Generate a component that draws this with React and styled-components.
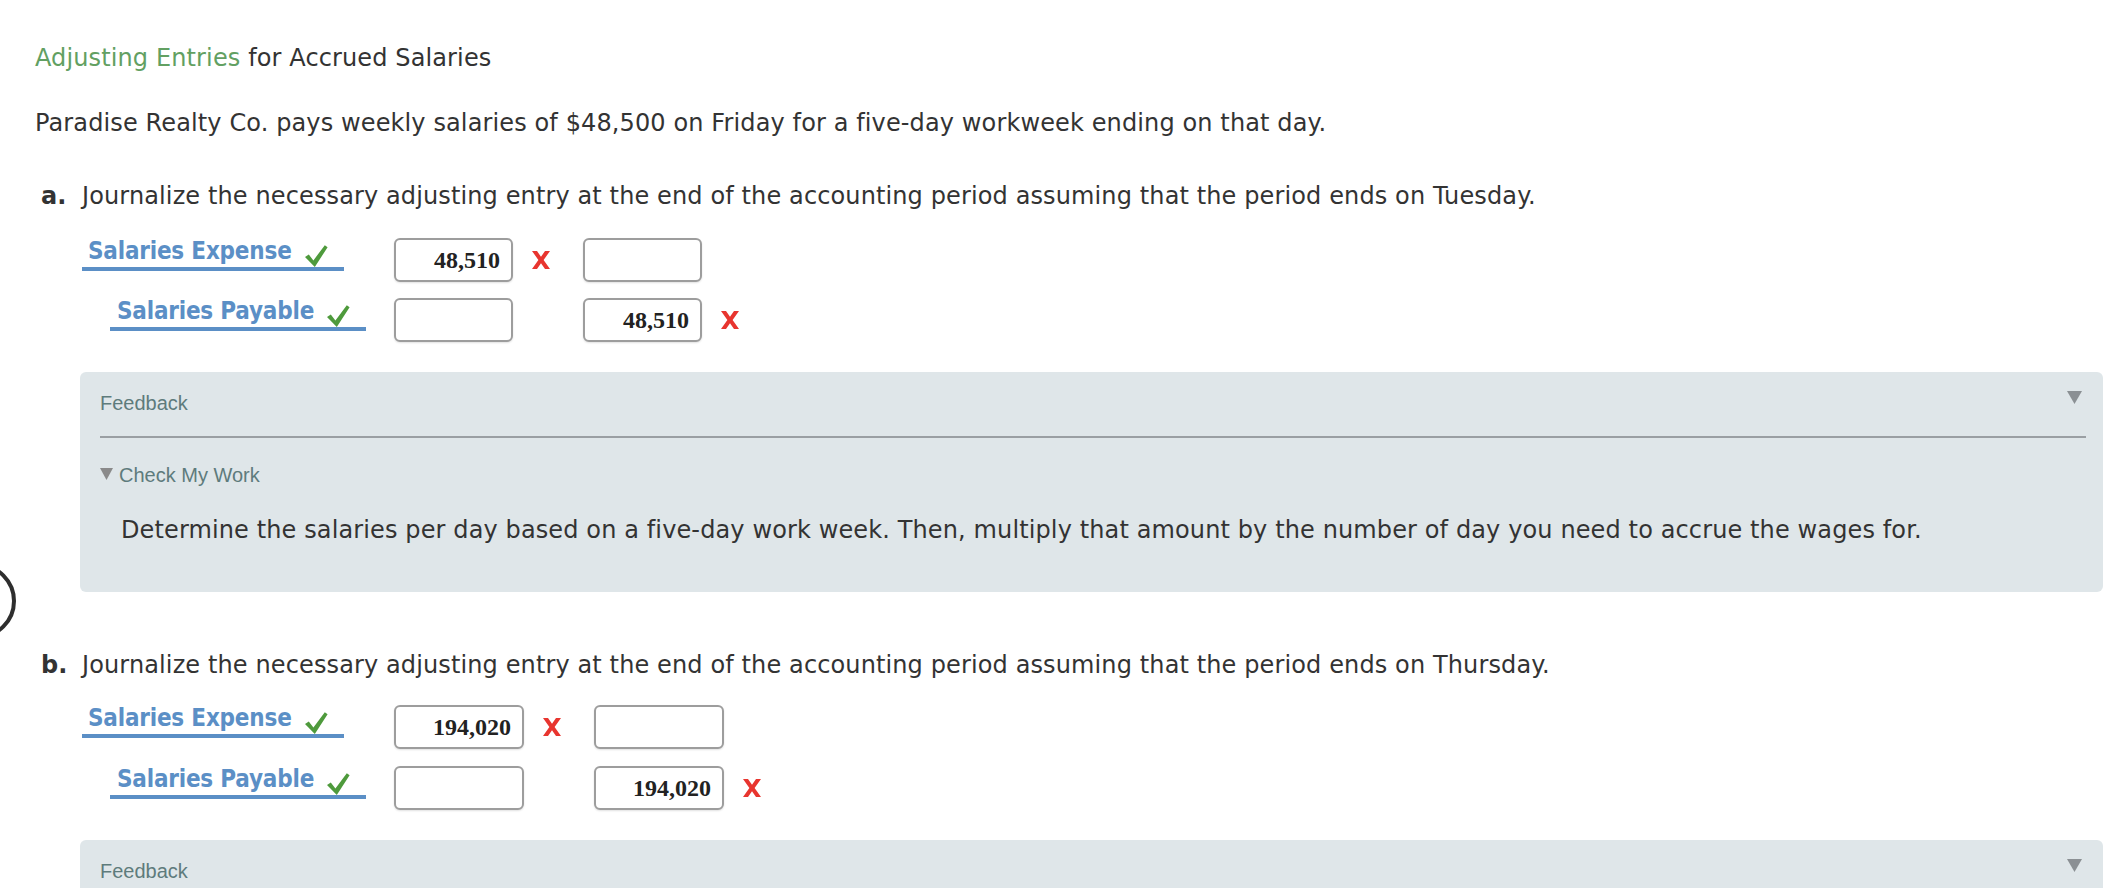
import React from "react";
import styled, { createGlobalStyle } from "styled-components";

const GlobalStyle = createGlobalStyle`
  html, body {
    margin: 0;
    padding: 0;
    background: #ffffff;
    overflow: hidden;
  }
  body {
    font-family: "DejaVu Sans", Verdana, sans-serif;
    color: #333333;
  }
`;

const Page = styled.div`
  position: relative;
  padding: 44px 1px 0 35px;
  font-family: "DejaVu Sans", Verdana, sans-serif;
  font-size: 24px;
  line-height: 28px;
  letter-spacing: 0.12px;
  color: #333333;
`;

const Title = styled.h1`
  margin: 0;
  font-size: 24px;
  line-height: 28px;
  font-weight: normal;
  color: #333333;
`;

const Green = styled.span`
  color: #62a062;
`;

const Intro = styled.p`
  margin: 37px 0 0 0;
`;

const Part = styled.section`
  margin-top: ${(p) => p.$top}px;
`;

const Question = styled.div`
  display: flex;
  padding-left: 6px;
`;

const PartLetter = styled.span`
  width: 41px;
  flex: none;
  font-weight: bold;
`;

const Entries = styled.div`
  display: flex;
  flex-direction: column;
  gap: ${(p) => p.$gap}px;
  margin-top: ${(p) => p.$top}px;
  padding-left: 47px;
`;

const EntryRow = styled.div`
  display: flex;
  align-items: flex-start;
`;

const LabelCell = styled.div`
  width: 312px;
  flex: none;
  padding-left: ${(p) => p.$indent}px;
  box-sizing: border-box;
  margin-top: -1px;
`;

const AccountLabel = styled.span`
  display: inline-flex;
  align-items: center;
  gap: 12px;
  padding: 0 16px 2px ${(p) => p.$padLeft}px;
  border-bottom: 4px solid #5b8fc6;
  font-family: "DejaVu Sans Condensed", "DejaVu Sans", sans-serif;
  font-stretch: condensed;
  font-weight: bold;
  font-size: 24px;
  line-height: 28px;
  letter-spacing: -0.2px;
  color: #5b8fc6;

  svg {
    transform: translateY(5px);
  }
`;

const AmountBox = styled.div`
  width: ${(p) => p.$w}px;
  height: 44px;
  flex: none;
  box-sizing: border-box;
  border: 2px solid #9d9d9d;
  border-radius: 6px;
  background: #ffffff;
  box-shadow: 0 1px 2px rgba(0, 0, 0, 0.12);
  display: flex;
  align-items: center;
  justify-content: flex-end;
  padding-right: 11px;
  font-family: "Liberation Serif", "Times New Roman", serif;
  font-weight: bold;
  font-size: 24px;
  letter-spacing: 0;
  color: #222222;
`;

const MarkSlot = styled.div`
  width: 70px;
  height: 44px;
  flex: none;
  box-sizing: border-box;
  padding-left: 19px;
  display: flex;
  align-items: center;
`;

const Panel = styled.div`
  margin: ${(p) => p.$top}px 0 0 45px;
  padding: 19px 21px 48px 20px;
  background: #dfe6e9;
  border-radius: 6px;
`;

const PanelHeader = styled.div`
  display: flex;
  justify-content: space-between;
  align-items: flex-start;
  font-family: "Liberation Sans", Arial, sans-serif;
  font-size: 20px;
  line-height: 24px;
  letter-spacing: 0;
  color: #5e7b7c;
`;

const Divider = styled.div`
  height: 2px;
  margin: 21px -4px 0 0;
  background: #9a9fa3;
`;

const Disclosure = styled.div`
  display: flex;
  align-items: flex-start;
  gap: 6px;
  margin-top: 25px;
  font-family: "Liberation Sans", Arial, sans-serif;
  font-size: 20px;
  line-height: 24px;
  letter-spacing: 0;
  color: #5e7b7c;

  svg {
    margin-top: 5px;
  }
`;

const Hint = styled.p`
  margin: 29px 0 0 0;
  padding-left: 21px;
  font-size: 24px;
  line-height: 28px;
  color: #333333;
`;

const Ring = styled.div`
  position: absolute;
  left: -60px;
  top: 563px;
  width: 76px;
  height: 76px;
  box-sizing: border-box;
  border: 4px solid #2e2e2e;
  border-radius: 50%;
`;

const Check = () => (
  <svg width="24" height="24" viewBox="0 0 24 24">
    <path d="M1 13 L4.8 10.4 L9.4 16.4 L20.8 1.2 L23.6 3.2 L10.8 23 Z" fill="#4e9a3c" />
  </svg>
);

const Cross = () => (
  <svg width="18" height="18" viewBox="0 0 18 18">
    <path
      d="M0 0 L5 0 L9 5.8 L13 0 L18 0 L11.6 9 L18 18 L13 18 L9 12.2 L5 18 L0 18 L6.4 9 Z"
      fill="#e8352f"
    />
  </svg>
);

const Caret = ({ w, h, color }) => (
  <svg width={w} height={h} viewBox={`0 0 ${w} ${h}`}>
    <path d={`M0 0 L${w} 0 L${w / 2} ${h} Z`} fill={color} />
  </svg>
);

const Entry = ({ label, indent, padLeft, debit, credit, debitWrong, creditWrong, w }) => (
  <EntryRow>
    <LabelCell $indent={indent}>
      <AccountLabel $padLeft={padLeft}>
        {label}
        <Check />
      </AccountLabel>
    </LabelCell>
    <AmountBox $w={w}>{debit}</AmountBox>
    <MarkSlot>{debitWrong && <Cross />}</MarkSlot>
    <AmountBox $w={w}>{credit}</AmountBox>
    <MarkSlot>{creditWrong && <Cross />}</MarkSlot>
  </EntryRow>
);

const FeedbackBox = ({ top, hint }) => (
  <Panel $top={top}>
    <PanelHeader>
      <span>Feedback</span>
      <Caret w={15} h={13} color="#8b9094" />
    </PanelHeader>
    {hint && (
      <>
        <Divider />
        <Disclosure>
          <Caret w={13} h={12} color="#8a8a8a" />
          <span>Check My Work</span>
        </Disclosure>
        <Hint>{hint}</Hint>
      </>
    )}
  </Panel>
);

const hintText =
  "Determine the salaries per day based on a five-day work week. Then, multiply that amount by the number of day you need to accrue the wages for.";

export default function App() {
  return (
    <>
      <GlobalStyle />
      <Page>
        <Title>
          <Green>Adjusting Entries</Green> for Accrued Salaries
        </Title>
        <Intro>
          Paradise Realty Co. pays weekly salaries of $48,500 on Friday for a five-day workweek ending on that day.
        </Intro>

        <Part $top={45}>
          <Question>
            <PartLetter>a.</PartLetter>
            <span>
              Journalize the necessary adjusting entry at the end of the accounting period assuming that the period ends on Tuesday.
            </span>
          </Question>
          <Entries $top={28} $gap={16}>
            <Entry label="Salaries Expense" indent={0} padLeft={6} debit="48,510" credit="" debitWrong w={119} />
            <Entry label="Salaries Payable" indent={28} padLeft={7} debit="" credit="48,510" creditWrong w={119} />
          </Entries>
          <FeedbackBox top={30} hint={hintText} />
        </Part>

        <Part $top={59}>
          <Question>
            <PartLetter>b.</PartLetter>
            <span>
              Journalize the necessary adjusting entry at the end of the accounting period assuming that the period ends on Thursday.
            </span>
          </Question>
          <Entries $top={26} $gap={17}>
            <Entry label="Salaries Expense" indent={0} padLeft={6} debit="194,020" credit="" debitWrong w={130} />
            <Entry label="Salaries Payable" indent={28} padLeft={7} debit="" credit="194,020" creditWrong w={130} />
          </Entries>
          <FeedbackBox top={30} />
        </Part>

        <Ring />
      </Page>
    </>
  );
}
